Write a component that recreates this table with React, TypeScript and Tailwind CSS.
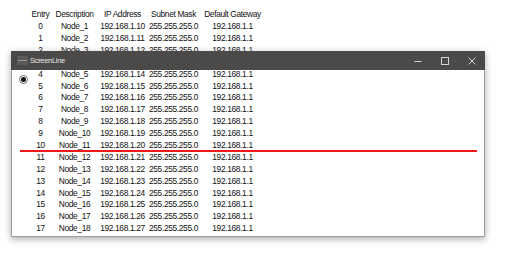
const rows = Array.from({ length: 18 }, (_, i) => ({
  entry: String(i),
  name: `Node_${i + 1}`,
  ip: `192.168.1.${10 + i}`,
  mask: "255.255.255.0",
  gw: "192.168.1.1",
}))

const widths = ["w-[25px]", "w-[43px]", "w-[53px]", "w-[49px]", "w-[69px]"]

// rows fully behind the window title bar are never seen
const Row = ({ cells, hidden }: { cells: string[]; hidden?: boolean }) => (
  <div className={`flex h-[11.9px] items-center ${hidden ? "invisible" : ""}`}>
    {cells.map((c, i) => (
      <div key={i} className={`${widths[i]} flex justify-center whitespace-nowrap`}>
        {c}
      </div>
    ))}
  </div>
)

const TitleButtons = () => (
  <div className="ml-auto flex h-full">
    <div className="flex w-[27px] items-center justify-center">
      <svg width="8" height="8" viewBox="0 0 8 8">
        <path d="M0.5 4.5h7" stroke="#d4d4d4" strokeWidth="1" />
      </svg>
    </div>
    <div className="flex w-[27px] items-center justify-center">
      <svg width="8" height="8" viewBox="0 0 8 8">
        <rect x="0.5" y="0.5" width="7" height="7" fill="none" stroke="#d4d4d4" strokeWidth="1" />
      </svg>
    </div>
    <div className="flex w-[27px] items-center justify-center">
      <svg width="8" height="8" viewBox="0 0 8 8">
        <path d="M0.5 0.5l7 7M7.5 0.5l-7 7" stroke="#d4d4d4" strokeWidth="1" />
      </svg>
    </div>
  </div>
)

export default function App() {
  return (
    <div className="relative h-[253px] w-[505px] overflow-hidden bg-white font-['Liberation_Sans',Arial,sans-serif] text-[8.4px] leading-none tracking-[-0.35px] text-[#111]">
      <div className="pl-[28px] pt-[8.5px]">
        <Row cells={["Entry", "Description", "IP Address", "Subnet Mask", "Default Gateway"]} />
        {rows.map((r, i) => (
          <Row key={r.entry} hidden={i === 3} cells={[r.entry, r.name, r.ip, r.mask, r.gw]} />
        ))}
      </div>

      {/* ScreenLine tool window, client area is see-through */}
      <div className="absolute left-[11px] top-[51px] flex h-[186px] w-[474px] flex-col shadow-[0_2px_7px_rgba(0,0,0,0.35)]">
        <div className="flex h-[19px] items-center bg-[#4b4a48] text-[7.5px] tracking-[-0.3px] text-[#e6e6e6]">
          <svg className="ml-[6px]" width="11" height="9" viewBox="0 0 11 9">
            <rect x="0" y="0" width="11" height="9" fill="#5c5a58" />
            <path d="M1 4.5h9" stroke="#9a9896" strokeWidth="1" />
          </svg>
          <span className="ml-[2px]">ScreenLine</span>
          <TitleButtons />
        </div>
        <div className="relative flex-1 border-x border-b border-[#9e9e9e]">
          <div className="absolute left-[7px] top-[5px] flex h-[9px] w-[9px] items-center justify-center rounded-full border border-[#6e6e6e] bg-white">
            <div className="h-[5px] w-[5px] rounded-full bg-[#111]" />
          </div>
          <div className="absolute left-[8px] top-[80px] h-[2px] w-[457px] bg-[#f01818]" />
        </div>
      </div>
    </div>
  )
}
